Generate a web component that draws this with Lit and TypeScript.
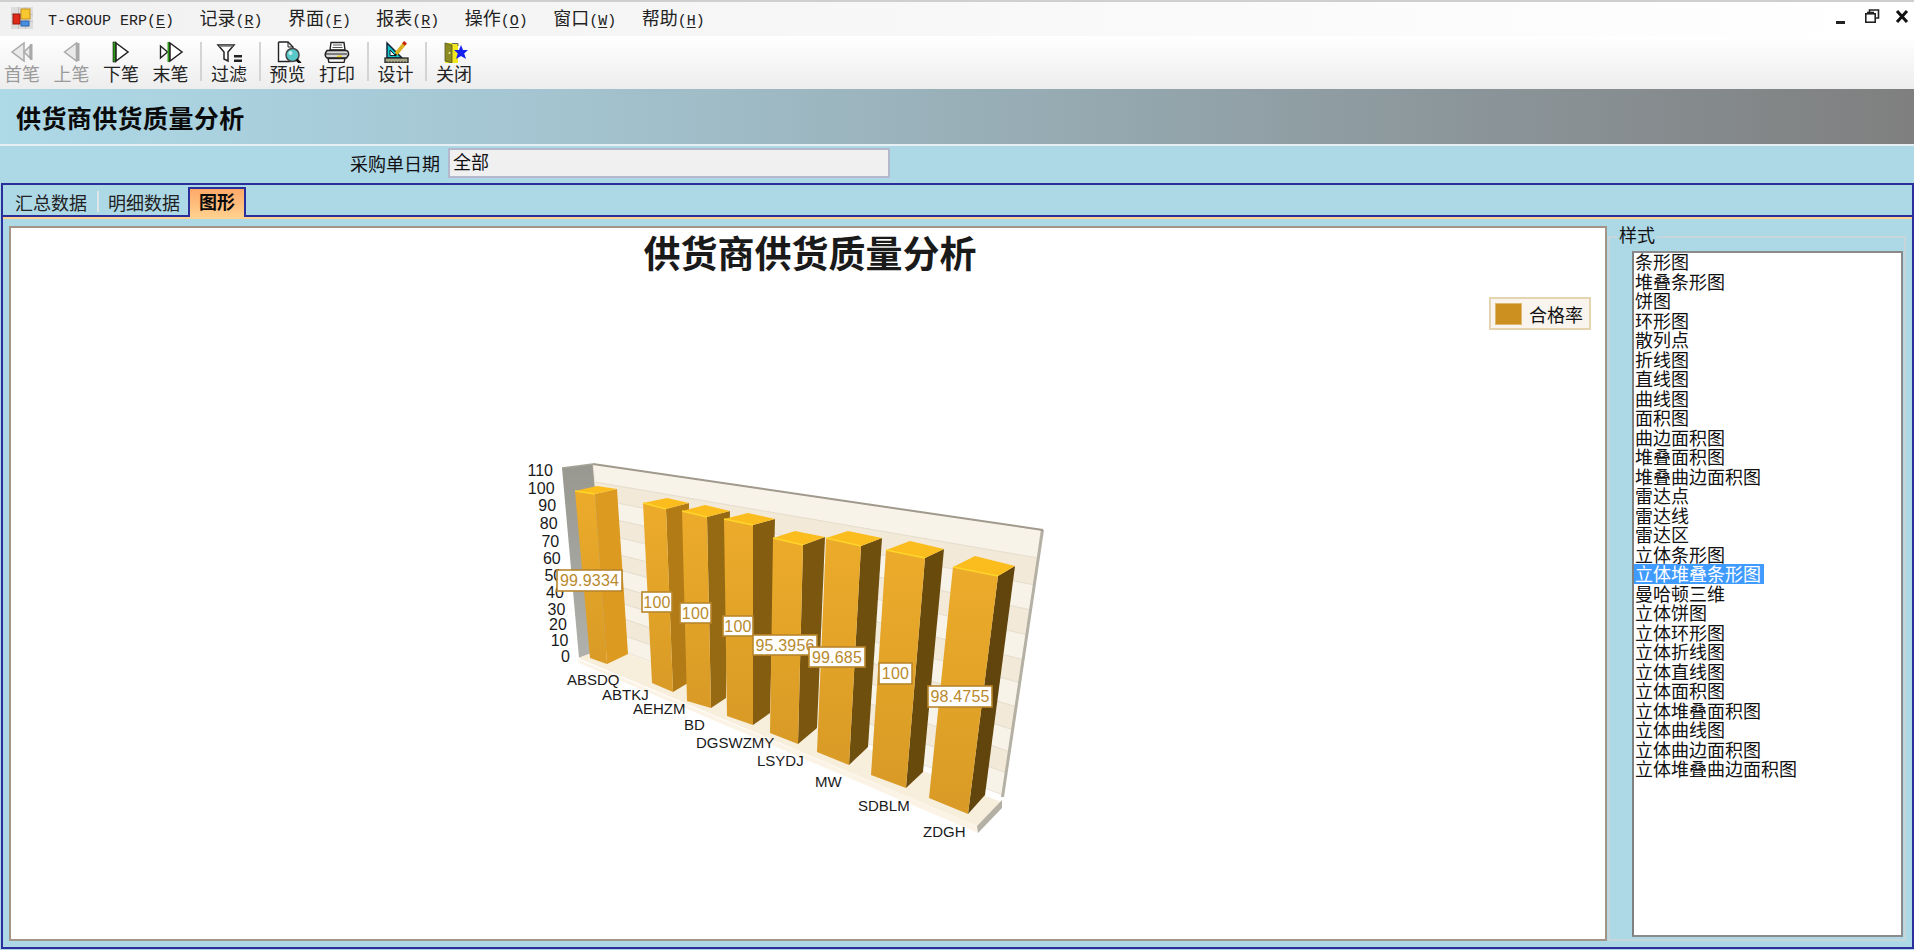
import { LitElement, html, css, svg } from "lit";
import { customElement } from "lit/decorators.js";

type P = [number, number];
const pts = (a: P[]) => a.map((p) => p.join(",")).join(" ");

const RIGHT_Y = [530, 558, 585, 610, 635, 660, 683, 707, 730, 752, 773, 795];
const LEFT_Y = [464, 482, 499, 516, 533, 550, 565, 582, 598, 613, 630, 646];
const rx = (i: number) => 1041 - (38 * i) / 11;
const lx = (i: number) => 593 + (17 * i) / 11;

const AXIS: [string, number][] = [
  ["110", 470], ["100", 488], ["90", 505], ["80", 523], ["70", 541], ["60", 558],
  ["50", 575], ["40", 592], ["30", 609], ["20", 624], ["10", 640], ["0", 656],
];

const BARS: { f: P[]; s: P[]; t: P[]; side: string }[] = [
  { f: [[575, 491], [595, 494], [607, 664], [590, 658]], s: [[595, 494], [617, 489], [628, 654], [607, 664]], t: [[575, 491], [597, 486], [617, 489], [595, 494]], side: "#dc9b20" },
  { f: [[643, 503], [666, 509], [673, 692], [652, 683]], s: [[666, 509], [689, 503], [688, 683], [673, 692]], t: [[643, 503], [667, 498], [689, 503], [666, 509]], side: "#b27b16" },
  { f: [[682, 511], [707, 517], [711, 708], [687, 701]], s: [[707, 517], [730, 511], [726, 698], [711, 708]], t: [[682, 511], [705, 505], [730, 511], [707, 517]], side: "#966a12" },
  { f: [[724, 519], [753, 525], [753, 725], [727, 716]], s: [[753, 525], [775, 519], [770, 713], [753, 725]], t: [[724, 519], [748, 513], [775, 519], [753, 525]], side: "#845d10" },
  { f: [[773, 538], [803, 545], [798, 744], [770, 733]], s: [[803, 545], [825, 537], [817, 728], [798, 744]], t: [[773, 538], [795, 531], [825, 537], [803, 545]], side: "#7a560f" },
  { f: [[826, 538], [861, 546], [849, 765], [817, 752]], s: [[861, 546], [882, 538], [868, 747], [849, 765]], t: [[826, 538], [848, 531], [882, 538], [861, 546]], side: "#6f4f0e" },
  { f: [[886, 550], [925, 558], [906, 788], [871, 775]], s: [[925, 558], [944, 549], [923, 772], [906, 788]], t: [[886, 550], [910, 541], [944, 549], [925, 558]], side: "#684a0d" },
  { f: [[953, 567], [998, 576], [968, 814], [929, 798]], s: [[998, 576], [1015, 566], [985, 795], [968, 814]], t: [[953, 567], [975, 556], [1015, 566], [998, 576]], side: "#61450c" },
];

const CATS: [string, number, number][] = [
  ["ABSDQ", 567, 679], ["ABTKJ", 602, 694], ["AEHZM", 633, 708], ["BD", 684, 724],
  ["DGSWZMY", 696, 742], ["LSYDJ", 757, 760], ["MW", 815, 781], ["SDBLM", 858, 805], ["ZDGH", 923, 831],
];

const VALUES: [string, number, number, number, number][] = [
  ["99.9334", 556, 569, 67, 23], ["100", 641, 591, 32, 22], ["100", 679, 602, 33, 22],
  ["100", 722, 615, 32, 22], ["95.3956", 752, 634, 66, 22], ["99.685", 808, 646, 58, 22],
  ["100", 878, 662, 35, 23], ["98.4755", 927, 685, 66, 23],
];

const chart = html`<svg class="chart" width="1594" height="711" viewBox="11 228 1594 711">
  <defs>
    <linearGradient id="front" x1="0" y1="0" x2="0" y2="1">
      <stop offset="0" stop-color="#ecab2a" /><stop offset="1" stop-color="#d99b26" />
    </linearGradient>
    <linearGradient id="wallL" x1="0" y1="0" x2="0" y2="1">
      <stop offset="0" stop-color="#989890" /><stop offset="1" stop-color="#b0b0ac" />
    </linearGradient>
  </defs>
  <polygon points="562,468 593,464 610,646 579,658" fill="url(#wallL)" />
  ${RIGHT_Y.slice(0, 11).map((_, i) => svg`<polygon
      points=${pts([[lx(i), LEFT_Y[i]], [rx(i), RIGHT_Y[i]], [rx(i + 1), RIGHT_Y[i + 1]], [lx(i + 1), LEFT_Y[i + 1]]])}
      fill=${i % 2 ? "#f2e9d8" : "#f7f3e9"} stroke="#e2dac8" stroke-width=".7" />`)}
  <polygon points="1041,530 1044,530 1004,797 1001,797" fill="#b4b0a4" />
  <line x1="562" y1="468" x2="593" y2="464" stroke="#a8a498" stroke-width="1.5" />
  <line x1="593" y1="464" x2="1043" y2="530" stroke="#a09a8c" stroke-width="2" />
  <polygon points="578,658 610,646 1001,802 977,826" fill="#f8eedc" />
  <polygon points="577,659 977,826 978,833 579,663" fill="#fbf4e6" />
  <polygon points="977,826 1002,800 1002,808 978,833" fill="#b4b0a4" />
  ${AXIS.map(([t, y], i) => svg`<text class="axis num" x=${553 + (17 * i) / 11} y=${y + 5.5} text-anchor="end">${t}</text>`)}
  ${CATS.map(([t, x, y]) => svg`<text class="axis" x=${x} y=${y + 5.5}>${t}</text>`)}
  ${BARS.map((b) => svg`
    <polygon points=${pts(b.s)} fill=${b.side} />
    <polygon points=${pts(b.f)} fill="url(#front)" />
    <polygon points=${pts(b.t)} fill="#fbbd1e" />
    <line x1=${b.f[0][0]} y1=${b.f[0][1]} x2=${b.f[1][0]} y2=${b.f[1][1]} stroke="#ffd52a" stroke-width="1.5" />`)}
  ${VALUES.map(([t, x, y, w, h]) => svg`
    <rect x=${x + 1} y=${y + 1} width=${w - 2} height=${h - 2} fill="#fff" stroke="#b8862c" stroke-width="1.6" />
    <text class="val" x=${x + w / 2} y=${y + h / 2 + 5.8} text-anchor="middle">${t}</text>`)}
</svg>`;

const G = "#e9e9e9", GS = "#a9a9a9";
const I = {
  first: svg`<polygon points="5,11 17,2 17,20" fill=${G} stroke=${GS} stroke-width="1.5"/><polygon points="17,11 23,5 23,17" fill=${G} stroke=${GS} stroke-width="1.5"/><rect x="23" y="3" width="2.5" height="16" fill=${GS}/>`,
  prev: svg`<polygon points="7.5,11 19.5,2 19.5,20" fill=${G} stroke=${GS} stroke-width="1.5"/><rect x="19.5" y="2" width="3" height="18" fill=${GS}/>`,
  next: svg`<rect x="7" y="1" width="3" height="20" fill="#2f9a16" stroke="#111" stroke-width=".6"/><polygon points="10,2 22,11 10,20" fill="#fff" stroke="#222" stroke-width="1.5"/>`,
  last: svg`<polygon points="4.5,5 11.5,11 4.5,17" fill="#fff" stroke="#222" stroke-width="1.4"/><rect x="11.5" y="1" width="2.5" height="20" fill="#2f9a16"/><polygon points="14,2 26,11 14,20" fill="#fff" stroke="#222" stroke-width="1.5"/>`,
  filter: svg`<polygon points="4,4 20,4 14,11 14,20 10,18 10,11" fill="#fff" stroke="#222" stroke-width="1.5"/><path d="M5 5h14" stroke="#777" stroke-width="1.5"/><rect x="20" y="14" width="8" height="2.5" fill="#222"/><rect x="20" y="18.5" width="8" height="2.5" fill="#222"/>`,
  preview: svg`<path d="M5.5 1V20.5H17V15M5.5 1H15L20 6V9" fill="#fff" stroke="#222" stroke-width="1.4"/><path d="M15 1V6H20" fill="none" stroke="#222"/><circle cx="19.5" cy="14" r="6.5" fill="#58c8c8" stroke="#444" stroke-width="1.5"/><circle cx="17.5" cy="12" r="2" fill="#c8f0f0"/><path d="M23.5 18.5L27.5 22.5" stroke="#111" stroke-width="2.6"/>`,
  print: svg`<path d="M9 1.5H22L23 9H8Z" fill="#fff" stroke="#222" stroke-width="1.4"/><path d="M11 4H20M10.5 6.5H20.5" stroke="#555"/><path d="M5 9.5H24Q27 10 26.5 14L24.5 17H5Q2.5 15 3.5 12Z" fill="#d8d8d8" stroke="#222" stroke-width="1.5"/><path d="M4 13H25" stroke="#222"/><rect x="15" y="14.5" width="5" height="1.6" fill="#e8d020"/><path d="M6 17.5H23L22 21.5H7Z" fill="#fff" stroke="#222" stroke-width="1.4"/>`,
  design: svg`<polygon points="6,2 6,17 21,17" fill="#14c4cc" stroke="#123" stroke-width="1.5"/><polygon points="9,9 9,14.5 14.5,14.5" fill="#e8f4f4" stroke="#123"/><rect x="4" y="17" width="23" height="5" fill="#a8a888" stroke="#222" stroke-width="1.3"/><path d="M6 22v-2M9 22v-2M12 22v-2M15 22v-2M18 22v-2M21 22v-2M24 22v-2" stroke="#222" stroke-width=".8"/><path d="M15 13L24 2" stroke="#d8b020" stroke-width="3.6"/><path d="M22.5 3.5L24.5 1.2" stroke="#c82010" stroke-width="3.6"/><path d="M15 13l-1 2" stroke="#111" stroke-width="2"/>`,
  close: svg`<rect x="6" y="2" width="13" height="20" fill="#f2e81e"/><polygon points="6,2 13,4 13,22 6,20" fill="#8c8c22" stroke="#555520" stroke-width=".8"/><path d="M13 2.5H19V5" fill="none" stroke="#666" stroke-width="1"/><circle cx="10.5" cy="12" r="1" fill="#ece8a0"/><polygon points="22,4 24,9 29,9 25.2,12.5 27,18 22,15 17,18 18.8,12.5 15,9 20,9" fill="#1420f0"/>`,
};

const BTN: (["b", string, unknown, boolean] | ["s"])[] = [
  ["b", "首笔", I.first, true], ["b", "上笔", I.prev, true], ["b", "下笔", I.next, false], ["b", "末笔", I.last, false], ["s"],
  ["b", "过滤", I.filter, false], ["s"],
  ["b", "预览", I.preview, false], ["b", "打印", I.print, false], ["s"],
  ["b", "设计", I.design, false], ["s"],
  ["b", "关闭", I.close, false],
];

const MENUS: [string, string][] = [["记录", "R"], ["界面", "F"], ["报表", "R"], ["操作", "O"], ["窗口", "W"], ["帮助", "H"]];

const STYLES = ["条形图", "堆叠条形图", "饼图", "环形图", "散列点", "折线图", "直线图", "曲线图", "面积图", "曲边面积图", "堆叠面积图", "堆叠曲边面积图", "雷达点", "雷达线", "雷达区", "立体条形图", "立体堆叠条形图", "曼哈顿三维", "立体饼图", "立体环形图", "立体折线图", "立体直线图", "立体面积图", "立体堆叠面积图", "立体曲线图", "立体曲边面积图", "立体堆叠曲边面积图"];

@customElement("app-root")
export class AppRoot extends LitElement {
  static styles = css`
    :host {
      display: flex;
      flex-direction: column;
      width: 1914px;
      height: 950px;
      overflow: hidden;
      background: #add8e6;
      color: #111;
      font: 18px/20px "Noto Sans CJK SC", "Liberation Sans", sans-serif;
    }
    .menu {
      height: 32px;
      padding-bottom: 2px;
      border-top: 2px solid #cfcfcf;
      display: flex;
      align-items: center;
      padding-left: 11px;
      background: linear-gradient(90deg, #f1f1f1, #ffffff);
    }
    .appicon { margin-right: 15px; }
    .mi { margin-right: 25.4px; white-space: nowrap; color: #222; }
    .lat { font: 15px "Liberation Mono", monospace; }
    .lat u { text-underline-offset: 2px; }
    .winbtns { margin-left: auto; margin-right: 2px; }
    .toolbar {
      height: 48px;
      padding: 5px 0 0 4px;
      display: flex;
      align-items: flex-start;
      background: linear-gradient(180deg, #ffffff, #ededed);
    }
    .tb { width: 36px; margin-right: 13.5px; display: flex; flex-direction: column; align-items: center; white-space: nowrap; color: #222; }
    .tb.off { color: #9a9a9a; }
    .tb svg { flex: none; }
    .sep { width: 2px; height: 39px; margin: 1px 9px 0 -2px; background: #d4d4d4; }
    .header {
      height: 55px;
      border-bottom: 2px solid #e6f0f4;
      display: flex;
      align-items: center;
      padding-left: 16px;
      font-size: 25px;
      font-weight: 700;
      letter-spacing: .4px;
      color: #0a0a0a;
      background: linear-gradient(90deg, #aed9e7 0%, #a3c3cf 30%, #7f7f7f 100%);
    }
    .filter { height: 34px; padding-bottom: 3px; display: flex; align-items: center; padding-left: 350px; }
    .filter .inp {
      width: 435px;
      height: 26px;
      margin-left: 8px;
      padding-left: 3px;
      line-height: 23px;
      border: 2px solid #b4b8cc;
      background: #f0f0f0;
    }
    .frame {
      flex: 1;
      min-height: 0;
      margin: 0 0 1px 1px;
      border: 2px solid #2a2f9c;
      display: flex;
      flex-direction: column;
    }
    .strip {
      height: 30px;
      border-bottom: 2px solid #2a2f9c;
      display: flex;
      align-items: flex-end;
      padding-left: 12px;
      position: relative;
    }
    .tab { height: 28px; line-height: 30px; color: #222; white-space: nowrap; }
    .tabsep { width: 2px; height: 21px; margin: 0 9px 3px 10px; background: #dfe6e8; }
    .tab.on {
      height: 28px;
      margin: 0 0 -2px 8px;
      padding: 0 9px;
      line-height: 24px;
      font-weight: 700;
      color: #0a0a0a;
      border: 2px solid #2a2f9c;
      border-bottom: 0;
      background: linear-gradient(180deg, #ffa868, #ffd08e);
      position: relative;
      z-index: 1;
    }
    .orange { height: 2px; background: #ffd08e; flex: none; }
    .body { flex: 1; min-height: 0; display: flex; gap: 1px; padding: 7px 6px 6px 6px; }
    .panel {
      flex: 1;
      min-width: 0;
      border: 2px solid #a39488;
      background: #fff;
      position: relative;
    }
    .title {
      margin: 0;
      padding-left: 4px;
      font-size: 37px;
      line-height: 48px;
      font-weight: 700;
      text-align: center;
      color: #1a1a1a;
    }
    .chart { position: absolute; left: 0; top: 0; }
    .axis { font: 15px "Liberation Sans", sans-serif; fill: #1a1a1a; }
    .num { font-size: 16px; }
    .val { font: 16px "Liberation Sans", sans-serif; fill: #b98a2e; letter-spacing: .2px; }
    .legend {
      position: absolute;
      left: 1478px;
      top: 69px;
      width: 102px;
      height: 33px;
      box-sizing: border-box;
      border: 2px solid #e4d5b0;
      background: #f9f5ee;
      display: flex;
      align-items: center;
      padding-left: 4px;
      gap: 7px;
    }
    .swatch { width: 27px; height: 22px; background: #cc9020; border: 1px solid #dcb870; box-sizing: border-box; }
    .group {
      width: 294px;
      margin: 10px 0 0;
      border: 2px solid #c6d6da;
      display: flex;
      flex-direction: column;
      position: relative;
    }
    .gl { position: absolute; left: 7px; top: -15px; padding: 0 2px; line-height: 22px; background: #add8e6; }
    .list {
      flex: 1;
      min-height: 0;
      margin: 13px 1px 2px 22px;
      border: 2px solid #8a8a8a;
      border-left-color: #808080;
      background: #fff;
      overflow: hidden;
    }
    .li { height: 19.5px; line-height: 19.5px; padding-left: 1px; white-space: nowrap; color: #111; }
    .li:first-child { margin-top: -1px; }
    .li.sel { width: fit-content; margin-left: -1px; padding: 0 3px 0 2px; background: #3f9bff; color: #fff; }
  `;

  render() {
    return html`
      <div class="menu">
        <svg class="appicon" width="22" height="22" viewBox="0 0 22 22">
          <rect width="22" height="22" fill="#dcdcdc" />
          <path d="M0 7.5H22M0 14.5H22M7.5 0V22M14.5 0V22" stroke="#c4c4c4" />
          <rect x="10" y="2" width="9" height="10" fill="#f8c830" stroke="#c89018" />
          <rect x="2" y="7" width="7" height="10" fill="#e02818" stroke="#901810" />
          <rect x="10" y="14" width="8" height="5" fill="#4890e0" stroke="#2860a8" />
        </svg>
        <span class="mi"><span class="lat">T-GROUP ERP(<u>E</u>)</span></span>
        ${MENUS.map(([t, k]) => html`<span class="mi">${t}<span class="lat">(<u>${k}</u>)</span></span>`)}
        <svg class="winbtns" width="76" height="22" viewBox="0 0 76 22">
          <rect x="0" y="14" width="9" height="3" fill="#222" />
          <path d="M33.5 5.5V3H42.5V11H39" fill="none" stroke="#222" stroke-width="1.6" />
          <rect x="29.8" y="6.8" width="9.4" height="8.4" fill="#fff" stroke="#222" stroke-width="1.6" />
          <path d="M31 5.5H38" stroke="#222" stroke-width="1.6" />
          <path d="M61 4L71 15M71 4L61 15" stroke="#111" stroke-width="3" />
        </svg>
      </div>
      <div class="toolbar">
        ${BTN.map((b) =>
          b[0] === "s"
            ? html`<div class="sep"></div>`
            : html`<div class="tb ${b[3] ? "off" : ""}"><svg width="30" height="22" viewBox="0 0 30 22">${b[2]}</svg>${b[1]}</div>`
        )}
      </div>
      <div class="header">供货商供货质量分析</div>
      <div class="filter">采购单日期<div class="inp">全部</div></div>
      <div class="frame">
        <div class="strip">
          <div class="tab">汇总数据</div>
          <div class="tabsep"></div>
          <div class="tab">明细数据</div>
          <div class="tab on">图形</div>
        </div>
        <div class="orange"></div>
        <div class="body">
          <div class="panel">
            <h1 class="title">供货商供货质量分析</h1>
            ${chart}
            <div class="legend"><div class="swatch"></div>合格率</div>
          </div>
          <div class="group">
            <div class="gl">样式</div>
            <div class="list">
              ${STYLES.map((s, i) => html`<div class="li ${i === 16 ? "sel" : ""}">${s}</div>`)}
            </div>
          </div>
        </div>
      </div>
    `;
  }
}
